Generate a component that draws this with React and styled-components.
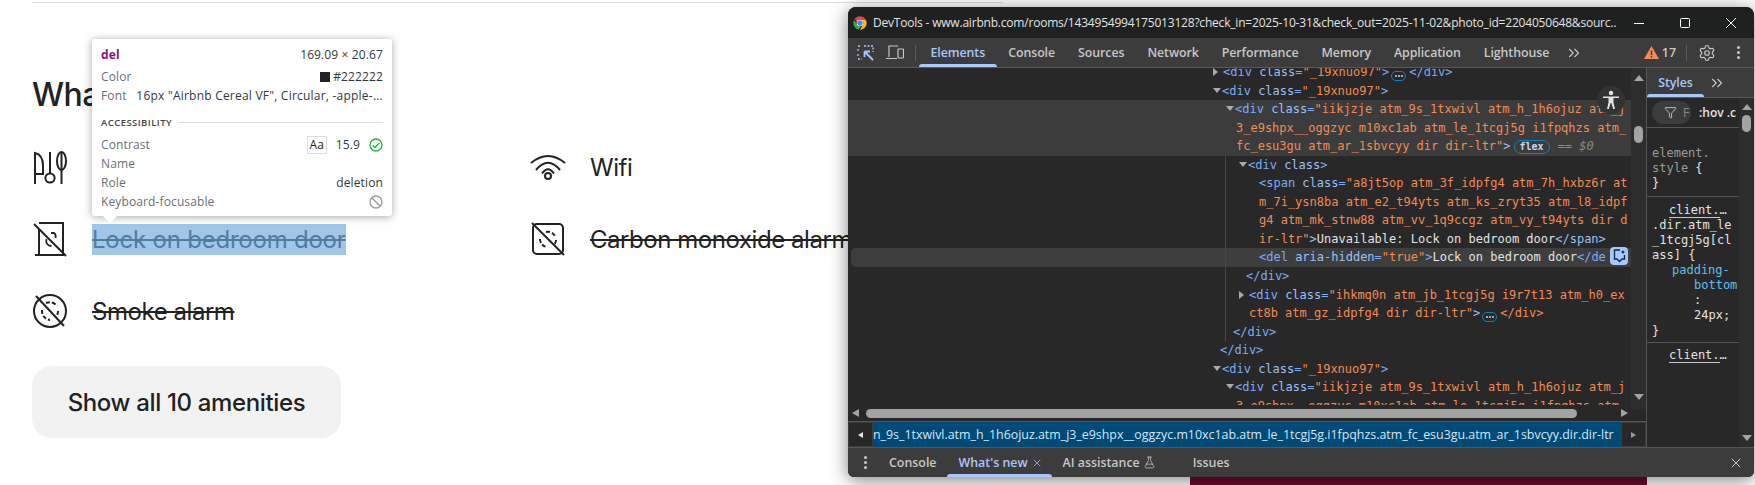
import React from "react";
import styled, { createGlobalStyle } from "styled-components";
import { ChevronsRight, Filter, FlaskConical, Settings, X } from "lucide-react";

const Global = createGlobalStyle`
  html, body { margin: 0; padding: 0; width: 1755px; height: 485px; overflow: hidden; background: #fff; }
  * { box-sizing: border-box; }
`;

const BODY_FONT = `Inter, "Noto Sans", sans-serif`;
const UI_FONT = `"Open Sans", "Noto Sans", sans-serif`;
const MONO = `"DejaVu Sans Mono", "Liberation Mono", monospace`;

const Page = styled.main`
  position: relative;
  width: 1755px;
  height: 485px;
  overflow: hidden;
  padding: 2px 0 0 32px;
  font-family: ${BODY_FONT};
  color: #222;
`;
const Rule = styled.div`
  width: 971px;
  height: 1px;
  background: #ddd;
`;
const Heading = styled.h2`
  margin: 72px 0 16px;
  font-size: 32px;
  line-height: 40px;
  font-weight: 500;
  letter-spacing: -0.5px;
`;
const AmenityGrid = styled.div`
  display: grid;
  grid-template-columns: 498px 498px;
  grid-auto-rows: 72px;
  width: 996px;
`;
const Amenity = styled.div`
  display: flex;
  align-items: center;
  gap: 24px;
  font-size: 24px;
  line-height: 31px;
  white-space: nowrap;
  letter-spacing: -0.45px;
  svg { flex: none; display: block; }
  del { text-decoration-thickness: 2px; }
`;
const Highlighted = styled.del`
  position: relative;
  display: block;
  width: 254px;
  height: 31px;
  letter-spacing: -0.22px;
  &::after {
    content: "";
    position: absolute;
    inset: 0;
    background: rgba(111, 168, 220, 0.66);
  }
`;
const ShowAll = styled.button`
  display: block;
  margin-top: 19px;
  width: 309px;
  height: 72px;
  border: 0;
  border-radius: 20px;
  background: #f2f2f2;
  color: #222;
  font-family: ${BODY_FONT};
  font-size: 24px;
  font-weight: 500;
  letter-spacing: -0.35px;
`;
const PageStrip = styled.div`
  position: absolute;
  left: 1190px;
  bottom: 0;
  width: 457px;
  height: 9px;
  background: #6b0a2f;
`;

const Tooltip = styled.aside`
  position: absolute;
  left: 92px;
  top: 39px;
  width: 300px;
  height: 177px;
  padding: 6px 9px 5px;
  background: #fff;
  border-radius: 3px;
  box-shadow: 0 1px 8px rgba(0, 0, 0, 0.35);
  font-family: ${UI_FONT};
  font-size: 12px;
  letter-spacing: 0.12px;
  color: #6a6f75;
  &::after {
    content: "";
    position: absolute;
    left: 13px;
    bottom: -5px;
    width: 10px;
    height: 10px;
    background: #fff;
    transform: rotate(45deg);
  }
`;
const TipRow = styled.div`
  display: flex;
  align-items: center;
  justify-content: space-between;
  height: 19px;
  white-space: nowrap;
  margin-bottom: ${(p) => p.$after || 0}px;
`;
const TipTag = styled.b`
  color: #881280;
  font-weight: 700;
`;
const TipValue = styled.span`
  color: #303942;
  display: flex;
  align-items: center;
  gap: 3px;
`;
const FontValue = styled(TipValue)`
  letter-spacing: 0.22px;
`;
const Swatch = styled.i`
  display: block;
  width: 10px;
  height: 10px;
  background: #222;
`;
const TipSection = styled.div`
  display: flex;
  align-items: center;
  gap: 6px;
  height: 14px;
  margin: 10px 0 6px;
  font-size: 9.5px;
  font-weight: 600;
  letter-spacing: 0.45px;
  color: #444;
  &::after {
    content: "";
    flex: 1;
    height: 1px;
    background: #ddd;
  }
`;
const Contrast = styled.span`
  display: flex;
  align-items: center;
  color: #303942;
  svg { margin-left: 9px; }
`;
const AaBox = styled.span`
  width: 20px;
  height: 18px;
  margin-right: 9px;
  border: 1px solid #ddd;
  color: #222;
  line-height: 16px;
  text-align: center;
`;

const Window = styled.section`
  position: absolute;
  left: 848px;
  top: 7px;
  width: 906px;
  height: 470px;
  display: flex;
  flex-direction: column;
  overflow: hidden;
  background: #282828;
  border-radius: 8px 8px 6px 6px;
  box-shadow: 0 3px 18px rgba(0, 0, 0, 0.5);
  font-family: ${UI_FONT};
  color: #e3e3e3;
`;
const TitleBar = styled.header`
  flex: none;
  display: flex;
  align-items: center;
  height: 31px;
  padding: 0 0 0 4px;
  background: #1f2020;
  font-size: 12px;
  letter-spacing: -0.2px;
  white-space: nowrap;
`;
const TitleText = styled.span`
  flex: none;
  margin-left: 5px;
  width: 743px;
  overflow: hidden;
`;
const WinControls = styled.div`
  display: flex;
  align-items: center;
`;
const WinControl = styled.span`
  width: 46px;
  display: flex;
  justify-content: center;
`;
const Toolbar = styled.nav`
  flex: none;
  display: flex;
  align-items: center;
  height: 30px;
  background: #3c3c3c;
  border-bottom: 1px solid #5a5a5a;
  padding-left: 9px;
  white-space: nowrap;
`;
const ToolIcons = styled.div`
  display: flex;
  align-items: center;
  gap: 11px;
  padding-right: 11px;
  margin-right: 3px;
  position: relative;
  height: 16px;
  border-right: 1px solid #5a5a5a;
`;
const Tabs = styled.div`
  display: flex;
  align-items: center;
  height: 100%;
  svg { margin-left: 4px; }
`;
const Tab = styled.span`
  position: relative;
  display: flex;
  align-items: center;
  height: 29px;
  padding: 0 11.5px;
  font-size: 12.4px;
  font-weight: 600;
  letter-spacing: -0.08px;
  color: ${(p) => (p.$active ? "#a8c7fa" : "#c7c7c7")};
  ${(p) =>
    p.$active &&
    `&::after { content: ""; position: absolute; left: 0; right: 0; bottom: 0; height: 3px; background: #a8c7fa; border-radius: 3px 3px 0 0; }`}
`;
const ToolEnd = styled.div`
  display: flex;
  align-items: center;
  margin-left: auto;
  padding-right: 14px;
  font-size: 12.4px;
  font-weight: 600;
  color: #c7c7c7;
`;
const WarnCount = styled.span`
  display: flex;
  align-items: center;
  gap: 3px;
  padding-right: 10px;
  margin-right: 11px;
  height: 16px;
  border-right: 1px solid #5a5a5a;
`;
const Kebab = styled.span`
  display: flex;
  flex-direction: column;
  gap: 2px;
  margin-left: ${(p) => p.$left || 0}px;
  i { display: block; width: 3px; height: 3px; border-radius: 50%; background: #c7c7c7; }
`;

const Body = styled.div`
  flex: 1;
  min-height: 0;
  display: flex;
`;
const ElementsPane = styled.div`
  width: 799px;
  display: flex;
  flex-direction: column;
  border-right: 1px solid #555;
`;
const TreeWrap = styled.div`
  position: relative;
  flex: 1;
  min-height: 0;
  display: flex;
  overflow: hidden;
`;
const Tree = styled.div`
  flex: 1;
  min-width: 0;
  margin: -5px 0 4px;
  overflow: hidden;
  font-family: ${MONO};
  font-size: 12px;
  color: #7cacf8;
`;
const Line = styled.div`
  height: 18.55px;
  line-height: 18.55px;
  white-space: nowrap;
  overflow: hidden;
  padding-left: ${(p) => p.$indent}px;
  background: ${(p) => (p.$selected ? "#3c3c3c" : "transparent")};
  color: ${(p) => (p.$wrap ? "#f28b54" : "#7cacf8")};
`;
const HoverLine = styled(Line)`
  margin-left: 3px;
  padding-left: ${(p) => p.$indent - 3}px;
  background: #3e3e3e;
  border-radius: 5px 0 0 5px;
`;
const Caret = styled.i`
  display: inline-block;
  width: 0;
  height: 0;
  margin-left: -10px;
  vertical-align: ${(p) => (p.$open ? "2px" : "0")};
  border-style: solid;
  ${(p) =>
    p.$open
      ? `border-width: 5px 4.5px 0; border-color: #aaa transparent transparent; margin-right: 1px;`
      : `border-width: 4.5px 0 4.5px 5px; border-color: transparent transparent transparent #aaa; margin-right: 5px;`}
`;
const Attr = styled.span`
  color: #9dc0f5;
`;
const Val = styled.span`
  color: #f28b54;
`;
const Txt = styled.span`
  color: #e3e3e3;
`;
const Dots = styled.span`
  display: inline-flex;
  align-items: center;
  justify-content: center;
  gap: 1px;
  width: 15px;
  height: 10px;
  margin: 0 3px 0 2px;
  vertical-align: -0.5px;
  border: 1px solid #1282bd;
  border-radius: 5px;
  i { display: block; width: 2px; height: 2px; border-radius: 50%; background: #c7d7ee; }
`;
const FlexBadge = styled.span`
  display: inline-block;
  height: 14px;
  line-height: 12px;
  padding: 0 5px;
  margin: 0 8px 0 3px;
  border: 1px solid #1282bd;
  border-radius: 7px;
  font-size: 10px;
  font-weight: 700;
  color: #c7d7ee;
  vertical-align: 0;
`;
const Muted = styled.span`
  color: #8a8a8a;
  i { font-style: italic; }
`;
const Guide = styled.div`
  position: absolute;
  left: 377px;
  top: 87px;
  width: 1px;
  height: 186px;
  background: #474747;
`;
const FloatButton = styled.span`
  position: absolute;
  left: 749px;
  top: 18px;
  width: 28px;
  height: 28px;
  border-radius: 50%;
  background: #333;
  display: flex;
  align-items: center;
  justify-content: center;
`;
const AiButton = styled.span`
  position: absolute;
  left: 762px;
  top: 179px;
  width: 18px;
  height: 18px;
  border-radius: 4px;
  background: #a8c7fa;
  display: flex;
  align-items: center;
  justify-content: center;
`;
const VBar = styled.div`
  flex: none;
  width: 15px;
  display: flex;
  flex-direction: column;
  align-items: center;
  background: #2d2d2d;
  padding: ${(p) => p.$pad};
`;
const Up = styled.i`
  display: block;
  width: 0;
  height: 0;
  border-style: solid;
  border-width: 0 5px 6px;
  border-color: transparent transparent #a3a3a3;
`;
const Down = styled.i`
  display: block;
  width: 0;
  height: 0;
  margin-top: auto;
  border-style: solid;
  border-width: 6px 5px 0;
  border-color: #a3a3a3 transparent transparent;
`;
const VThumb = styled.i`
  display: block;
  width: 9px;
  height: 17px;
  margin-top: ${(p) => p.$top}px;
  border-radius: 5px;
  background: #a3a3a3;
`;
const HBar = styled.div`
  flex: none;
  display: flex;
  align-items: center;
  height: 13px;
  padding: 0 18px 4px 4px;
  background: #282828;
  border-bottom: 1px solid #555;
`;
const Left = styled.i`
  display: block;
  width: 0;
  height: 0;
  border-style: solid;
  border-width: 4px 7px 4px 0;
  border-color: transparent #a3a3a3 transparent transparent;
`;
const Right = styled.i`
  display: block;
  width: 0;
  height: 0;
  margin-left: auto;
  border-style: solid;
  border-width: 4px 0 4px 7px;
  border-color: transparent transparent transparent #a3a3a3;
`;
const HThumb = styled.i`
  display: block;
  width: 711px;
  height: 9px;
  margin-left: 7px;
  border-radius: 5px;
  background: #a3a3a3;
`;
const Crumbs = styled.div`
  flex: none;
  display: flex;
  height: 25px;
`;
const CrumbArrow = styled.span`
  flex: none;
  width: 25px;
  display: flex;
  align-items: center;
  justify-content: center;
  background: #282828;
  border: 1px solid #3c3c3c;
  i {
    display: block;
    width: 0;
    height: 0;
    border-style: solid;
    ${(p) =>
      p.$back
        ? `border-width: 3.5px 5px 3.5px 0; border-color: transparent #e3e3e3 transparent transparent;`
        : `border-width: 3.5px 0 3.5px 5px; border-color: transparent transparent transparent #9a9a9a;`}
  }
`;
const CrumbText = styled.div`
  flex: 1;
  min-width: 0;
  overflow: hidden;
  background: #004a77;
  color: #d6e6f5;
  font-size: 12.4px;
  line-height: 25px;
  white-space: nowrap;
`;

const StylesPane = styled.div`
  flex: 1;
  min-width: 0;
  display: flex;
  flex-direction: column;
`;
const StyleTabs = styled.div`
  flex: none;
  display: flex;
  align-items: center;
  height: 30px;
  background: #3c3c3c;
  border-bottom: 1px solid #5a5a5a;
  font-size: 12px;
  font-weight: 600;
  color: #c7c7c7;
  svg { margin-left: 4px; }
`;
const StyleTab = styled(Tab)`
  height: 29px;
  width: 57px;
  justify-content: center;
  padding: 0;
`;
const StylesBody = styled.div`
  flex: 1;
  min-height: 0;
  display: flex;
  position: relative;
  overflow: hidden;
`;
const StylesMain = styled.div`
  width: 92px;
  flex: none;
  font-family: ${MONO};
  font-size: 12px;
  color: #e3e3e3;
  white-space: nowrap;
  overflow: hidden;
`;
const FilterRow = styled.div`
  display: flex;
  align-items: center;
  height: 30px;
  padding-left: 5px;
  border-bottom: 1px solid #555;
  font-family: ${UI_FONT};
  font-size: 12px;
  font-weight: 600;
`;
const FilterPill = styled.span`
  flex: none;
  display: flex;
  align-items: center;
  width: 39px;
  height: 23px;
  padding-left: 12px;
  gap: 6px;
  margin-right: 8px;
  border-radius: 12px;
  background: #3c3c3c;
  color: #8a8a8a;
  font-weight: 400;
  overflow: hidden;
  svg { flex: none; }
`;
const Rules = styled.div`
  padding: ${(p) => p.$pad};
  border-bottom: ${(p) => (p.$last ? "0" : "1px solid #555")};
`;
const RuleLine = styled.div`
  height: 15.1px;
  line-height: 15.1px;
  padding-left: ${(p) => p.$indent || 0}px;
  color: ${(p) => p.$color || "#e3e3e3"};
`;
const Source = styled.span`
  display: block;
  height: 15.1px;
  line-height: 15.1px;
  padding-left: 17px;
  span { border-bottom: 1px solid #c7c7c7; }
`;

const Drawer = styled.footer`
  flex: none;
  display: flex;
  align-items: center;
  height: 30px;
  background: #3c3c3c;
  border-top: 1px solid #555;
  padding: 0 10px 0 16px;
  font-size: 12.4px;
  font-weight: 600;
  color: #c7c7c7;
  white-space: nowrap;
`;
const DrawerTab = styled.span`
  position: relative;
  display: flex;
  align-items: center;
  gap: 3px;
  height: 29px;
  margin-left: ${(p) => p.$left}px;
  color: ${(p) => (p.$active ? "#a8c7fa" : "#c7c7c7")};
  ${(p) =>
    p.$active &&
    `&::after { content: ""; position: absolute; left: -11px; right: -9px; bottom: 0; height: 3px; background: #a8c7fa; border-radius: 3px 3px 0 0; }`}
`;
const DrawerClose = styled.span`
  margin-left: auto;
  display: flex;
`;

const ic = { fill: "none", stroke: "#222", strokeWidth: 2, strokeLinecap: "butt" };

const KitchenIcon = () => (
  <svg width="36" height="36" viewBox="0 0 36 36" {...ic}>
    <path d="M3 35V4c5 1 8 6 8 13v8H3" />
    <circle cx="18" cy="29" r="4.6" />
    <path d="M18 3v21M29.500 35V3" />
    <ellipse cx="29.500" cy="12" rx="4.500" ry="9" />
  </svg>
);
const LockIcon = () => (
  <svg width="36" height="36" viewBox="0 0 36 36" {...ic}>
    <path d="M7 2h24v32H3M7 8v26" />
    <path d="M2 3l32 32" />
    <path d="M19 12h3c1.500 1 2 3 1.500 5M14.500 18c-1 4 1 7 5 7" strokeWidth="1.800" />
  </svg>
);
const SmokeIcon = () => (
  <svg width="36" height="36" viewBox="0 0 36 36" {...ic}>
    <circle cx="18" cy="18" r="16" />
    <path d="M4 3l28 30" />
    <path d="M14 10a9 9 0 0 1 11 3M26 18a9 9 0 0 1-2 6M10 17a9 9 0 0 0 8 10" strokeDasharray="4 2" />
  </svg>
);
const WifiIcon = () => (
  <svg width="36" height="36" viewBox="0 0 36 36" {...ic}>
    <path d="M1 14Q18 0 35 14M6 21Q18 6.500 30 21M12 24.500Q18 16 24 24.500" />
    <circle cx="18" cy="27" r="3" />
  </svg>
);
const CoIcon = () => (
  <svg width="36" height="36" viewBox="0 0 36 36" {...ic}>
    <rect x="3" y="3" width="30" height="30" rx="4" />
    <path d="M2 2l32 32" />
    <path d="M16 11a8 8 0 0 1 9 4M26 19a8 8 0 0 1-2 5M10 18a8 8 0 0 0 7 8" strokeDasharray="4 2" />
  </svg>
);

const ChromeLogo = () => (
  <svg width="16" height="16" viewBox="0 0 48 48">
    <path fill="#ea4335" d="M24 4a20 20 0 0 1 17.300 10H24a10 10 0 0 0-9.500 6.800L7.600 11.500A20 20 0 0 1 24 4z" />
    <path fill="#34a853" d="M24 44a20 20 0 0 1-17.300-30l8.700 15A10 10 0 0 0 27 33.500L20.500 43.700A20 20 0 0 1 24 44z" />
    <path fill="#fbbc04" d="M41.300 14A20 20 0 0 1 24 44l8.700-15A10 10 0 0 0 33 19l-9-5z" />
    <circle cx="24" cy="24" r="10" fill="#fff" />
    <circle cx="24" cy="24" r="8" fill="#4285f4" />
  </svg>
);
const InspectIcon = () => (
  <svg width="18" height="16" viewBox="0 0 18 16" fill="none" stroke="#a8c7fa" strokeWidth="1.300">
    <path d="M7 1h9v6M1 1h3M1 4v2M1 9v2M1 14h4" strokeDasharray="2 1.500" />
    <path d="M7.500 6.500h5.500M7.500 6.500V12M8 7l8 8" strokeWidth="1.800" />
  </svg>
);
const DeviceIcon = () => (
  <svg width="18" height="15" viewBox="0 0 18 15" fill="none" stroke="#c7c7c7" strokeWidth="1.200">
    <path d="M3 12V1h9M0 13.500h11" />
    <rect x="12" y="4" width="5.500" height="9" rx="0.800" />
  </svg>
);
const WarnIcon = () => (
  <svg width="15" height="13" viewBox="0 0 15 13">
    <path fill="#f28b54" d="M7.500 0L15 13H0z" />
    <path fill="#3c3c3c" d="M6.800 4.500h1.400v4.500H6.800zM6.800 10h1.400v1.400H6.800z" />
  </svg>
);
const PersonIcon = () => (
  <svg width="18" height="20" viewBox="0 0 18 20" fill="#e3e3e3">
    <circle cx="9" cy="3" r="2.200" />
    <path d="M1 6.500h16v1.600h-5.500v4.400L13 19h-1.800L9.300 13h-.6L6.800 19H5l1.500-6.500V8.100H1z" />
  </svg>
);
const AiIcon = () => (
  <svg width="13" height="14" viewBox="0 0 13 14" fill="none" stroke="#0a2a50" strokeWidth="1.300">
    <path d="M7 1H1.500v9h2.500l2.500 2.500L9 10h2.500V6" />
    <path d="M10 1l.7 1.300L12 3l-1.300.7L10 5l-.7-1.300L8 3l1.300-.7z" fill="#0a2a50" stroke="none" />
  </svg>
);
const OkIcon = () => (
  <svg width="14" height="14" viewBox="0 0 14 14" fill="none" stroke="#1db43a" strokeWidth="1.300">
    <circle cx="7" cy="7" r="6" />
    <path d="M3.800 7.200l2.300 2.300 4.300-4.600" />
  </svg>
);
const BanIcon = () => (
  <svg width="14" height="14" viewBox="0 0 14 14" fill="none" stroke="#9a9a9a" strokeWidth="1.300">
    <circle cx="7" cy="7" r="6" />
    <path d="M2.800 2.800l8.400 8.400" />
  </svg>
);
const DotPill = () => (
  <Dots>
    <i />
    <i />
    <i />
  </Dots>
);
const WinMin = () => <svg width="10" height="10" viewBox="0 0 10 10" stroke="#fff"><path d="M0 5.500h10" /></svg>;
const WinMax = () => <svg width="10" height="10" viewBox="0 0 10 10" fill="none" stroke="#fff"><rect x=".5" y=".5" width="9" height="9" rx="1" /></svg>;
const WinClose = () => <svg width="10" height="10" viewBox="0 0 10 10" stroke="#fff"><path d="M0 0l10 10M10 0L0 10" /></svg>;

const TabNames = ["Console", "Sources", "Network", "Performance", "Memory", "Application", "Lighthouse"];

export default function App() {
  return (
    <>
      <Global />
      <Page>
        <Rule />
        <Heading>What this place offers</Heading>
        <AmenityGrid>
          <Amenity><KitchenIcon /><span>Kitchen</span></Amenity>
          <Amenity><WifiIcon /><span>Wifi</span></Amenity>
          <Amenity><LockIcon /><Highlighted>Lock on bedroom door</Highlighted></Amenity>
          <Amenity><CoIcon /><del>Carbon monoxide alarm</del></Amenity>
          <Amenity><SmokeIcon /><del>Smoke alarm</del></Amenity>
        </AmenityGrid>
        <ShowAll>Show all 10 amenities</ShowAll>
        <PageStrip />

        <Tooltip>
          <TipRow $after={3}>
            <TipTag>del</TipTag>
            <TipValue>169.09 × 20.67</TipValue>
          </TipRow>
          <TipRow>
            <span>Color</span>
            <TipValue><Swatch />#222222</TipValue>
          </TipRow>
          <TipRow>
            <span>Font</span>
            <FontValue>16px "Airbnb Cereal VF", Circular, -apple-...</FontValue>
          </TipRow>
          <TipSection>ACCESSIBILITY</TipSection>
          <TipRow>
            <span>Contrast</span>
            <Contrast><AaBox>Aa</AaBox>15.9<OkIcon /></Contrast>
          </TipRow>
          <TipRow><span>Name</span></TipRow>
          <TipRow>
            <span>Role</span>
            <TipValue>deletion</TipValue>
          </TipRow>
          <TipRow>
            <span>Keyboard-focusable</span>
            <BanIcon />
          </TipRow>
        </Tooltip>

        <Window>
          <TitleBar>
            <ChromeLogo />
            <TitleText>DevTools - www.airbnb.com/rooms/1434954994175013128?check_in=2025-10-31&amp;check_out=2025-11-02&amp;photo_id=2204050648&amp;sourc…</TitleText>
            <WinControls>
              <WinControl><WinMin /></WinControl>
              <WinControl><WinMax /></WinControl>
              <WinControl><WinClose /></WinControl>
            </WinControls>
          </TitleBar>
          <Toolbar>
            <ToolIcons><InspectIcon /><DeviceIcon /></ToolIcons>
            <Tabs>
              <Tab $active>Elements</Tab>
              {TabNames.map((t) => <Tab key={t}>{t}</Tab>)}
              <ChevronsRight size={18} color="#c7c7c7" strokeWidth={1.5} />
            </Tabs>
            <ToolEnd>
              <WarnCount><WarnIcon />17</WarnCount>
              <Settings size={18} color="#c7c7c7" strokeWidth={1.6} />
              <Kebab $left={21}><i /><i /><i /></Kebab>
            </ToolEnd>
          </Toolbar>
          <Body>
            <ElementsPane>
              <TreeWrap>
                <Tree>
                  <Line $indent={375}><Caret />&lt;div <Attr>class</Attr>=<Val>"_19xnuo97"</Val>&gt;<DotPill />&lt;/div&gt;</Line>
                  <Line $indent={375}><Caret $open />&lt;div <Attr>class</Attr>=<Val>"_19xnuo97"</Val>&gt;</Line>
                  <Line $indent={388} $selected><Caret $open />&lt;div <Attr>class</Attr>=<Val>"iikjzje atm_9s_1txwivl atm_h_1h6ojuz atm_j</Val></Line>
                  <Line $indent={388} $selected $wrap>3_e9shpx__oggzyc m10xc1ab atm_le_1tcgj5g i1fpqhzs atm_</Line>
                  <Line $indent={388} $selected $wrap>fc_esu3gu atm_ar_1sbvcyy dir dir-ltr"<Attr>&gt;</Attr><FlexBadge>flex</FlexBadge><Muted>== <i>$0</i></Muted></Line>
                  <Line $indent={401}><Caret $open />&lt;div <Attr>class</Attr>&gt;</Line>
                  <Line $indent={411}>&lt;span <Attr>class</Attr>=<Val>"a8jt5op atm_3f_idpfg4 atm_7h_hxbz6r at</Val></Line>
                  <Line $indent={411} $wrap>m_7i_ysn8ba atm_e2_t94yts atm_ks_zryt35 atm_l8_idpf</Line>
                  <Line $indent={411} $wrap>g4 atm_mk_stnw88 atm_vv_1q9ccgz atm_vy_t94yts dir d</Line>
                  <Line $indent={411} $wrap>ir-ltr"<Attr>&gt;</Attr><Txt>Unavailable: Lock on bedroom door</Txt><Attr>&lt;/span&gt;</Attr></Line>
                  <HoverLine $indent={411}>&lt;del <Attr>aria-hidden</Attr>=<Val>"true"</Val>&gt;<Txt>Lock on bedroom door</Txt>&lt;/de</HoverLine>
                  <Line $indent={398}>&lt;/div&gt;</Line>
                  <Line $indent={401}><Caret />&lt;div <Attr>class</Attr>=<Val>"ihkmq0n atm_jb_1tcgj5g i9r7t13 atm_h0_ex</Val></Line>
                  <Line $indent={401} $wrap>ct8b atm_gz_idpfg4 dir dir-ltr"<Attr>&gt;</Attr><DotPill />&lt;/div&gt;</Line>
                  <Line $indent={385}>&lt;/div&gt;</Line>
                  <Line $indent={372}>&lt;/div&gt;</Line>
                  <Line $indent={375}><Caret $open />&lt;div <Attr>class</Attr>=<Val>"_19xnuo97"</Val>&gt;</Line>
                  <Line $indent={388}><Caret $open />&lt;div <Attr>class</Attr>=<Val>"iikjzje atm_9s_1txwivl atm_h_1h6ojuz atm_j</Val></Line>
                  <Line $indent={388} $wrap>3_e9shpx__oggzyc m10xc1ab atm_le_1tcgj5g i1fpqhzs atm_</Line>
                </Tree>
                <VBar $pad="7px 0 9px">
                  <Up />
                  <VThumb $top={45} />
                  <Down />
                </VBar>
                <Guide />
                <FloatButton><PersonIcon /></FloatButton>
                <AiButton><AiIcon /></AiButton>
              </TreeWrap>
              <HBar>
                <Left />
                <HThumb />
                <Right />
              </HBar>
              <Crumbs>
                <CrumbArrow $back><i /></CrumbArrow>
                <CrumbText>n_9s_1txwivl.atm_h_1h6ojuz.atm_j3_e9shpx__oggzyc.m10xc1ab.atm_le_1tcgj5g.i1fpqhzs.atm_fc_esu3gu.atm_ar_1sbvcyy.dir.dir-ltr</CrumbText>
                <CrumbArrow><i /></CrumbArrow>
              </Crumbs>
            </ElementsPane>
            <StylesPane>
              <StyleTabs>
                <StyleTab $active>Styles</StyleTab>
                <ChevronsRight size={18} color="#c7c7c7" strokeWidth={1.5} />
              </StyleTabs>
              <StylesBody>
                <StylesMain>
                  <FilterRow>
                    <FilterPill><Filter size={13} strokeWidth={1.4} color="#e3e3e3" />F</FilterPill>
                    :hov .c
                  </FilterRow>
                  <Rules $pad="18px 0 5px 5px">
                    <RuleLine $color="#9a9a9a">element.</RuleLine>
                    <RuleLine $color="#9a9a9a">style <Txt>{"{"}</Txt></RuleLine>
                    <RuleLine>{"}"}</RuleLine>
                  </Rules>
                  <Rules $pad="5.5px 0 3.5px 5px">
                    <Source><span>client.</span>…</Source>
                    <RuleLine>.dir.atm_le</RuleLine>
                    <RuleLine>_1tcgj5g[cl</RuleLine>
                    <RuleLine>ass] {"{"}</RuleLine>
                    <RuleLine $indent={20} $color="#5cc0e8">padding-</RuleLine>
                    <RuleLine $indent={42} $color="#5cc0e8">bottom</RuleLine>
                    <RuleLine $indent={42}>:</RuleLine>
                    <RuleLine $indent={42}>24px;</RuleLine>
                    <RuleLine>{"}"}</RuleLine>
                  </Rules>
                  <Rules $pad="4.5px 0 0 5px" $last>
                    <Source><span>client.</span>…</Source>
                  </Rules>
                </StylesMain>
                <VBar $pad="6px 0 6px">
                  <Up />
                  <VThumb $top={5} />
                  <Down />
                </VBar>
              </StylesBody>
            </StylesPane>
          </Body>
          <Drawer>
            <Kebab><i /><i /><i /></Kebab>
            <DrawerTab $left={22}>Console</DrawerTab>
            <DrawerTab $left={22} $active>What's new <X size={12} strokeWidth={1.4} /></DrawerTab>
            <DrawerTab $left={20}>AI assistance <FlaskConical size={13} strokeWidth={1.4} /></DrawerTab>
            <DrawerTab $left={37}>Issues</DrawerTab>
            <DrawerClose><X size={16} strokeWidth={1.5} /></DrawerClose>
          </Drawer>
        </Window>
      </Page>
    </>
  );
}
